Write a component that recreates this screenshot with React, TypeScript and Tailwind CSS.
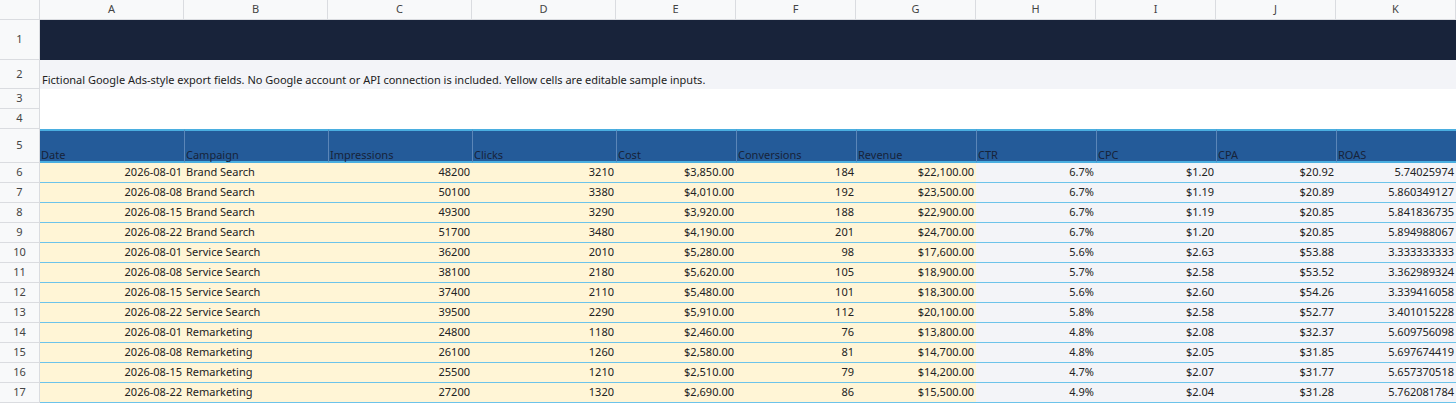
import React from "react";

const cols = ["A","B","C","D","E","F","G","H","I","J","K"];
const hdr = ["Date","Campaign","Impressions","Clicks","Cost","Conversions","Revenue","CTR","CPC","CPA","ROAS"];
const data: string[][] = [
["2026-08-01","Brand Search","48200","3210","$3,850.00","184","$22,100.00","6.7%","$1.20","$20.92","5.74025974"],
["2026-08-08","Brand Search","50100","3380","$4,010.00","192","$23,500.00","6.7%","$1.19","$20.89","5.860349127"],
["2026-08-15","Brand Search","49300","3290","$3,920.00","188","$22,900.00","6.7%","$1.19","$20.85","5.841836735"],
["2026-08-22","Brand Search","51700","3480","$4,190.00","201","$24,700.00","6.7%","$1.20","$20.85","5.894988067"],
["2026-08-01","Service Search","36200","2010","$5,280.00","98","$17,600.00","5.6%","$2.63","$53.88","3.333333333"],
["2026-08-08","Service Search","38100","2180","$5,620.00","105","$18,900.00","5.7%","$2.58","$53.52","3.362989324"],
["2026-08-15","Service Search","37400","2110","$5,480.00","101","$18,300.00","5.6%","$2.60","$54.26","3.339416058"],
["2026-08-22","Service Search","39500","2290","$5,910.00","112","$20,100.00","5.8%","$2.58","$52.77","3.401015228"],
["2026-08-01","Remarketing","24800","1180","$2,460.00","76","$13,800.00","4.8%","$2.08","$32.37","5.609756098"],
["2026-08-08","Remarketing","26100","1260","$2,580.00","81","$14,700.00","4.8%","$2.05","$31.85","5.697674419"],
["2026-08-15","Remarketing","25500","1210","$2,510.00","79","$14,200.00","4.7%","$2.07","$31.77","5.657370518"],
["2026-08-22","Remarketing","27200","1320","$2,690.00","86","$15,500.00","4.9%","$2.04","$31.28","5.762081784"],
];

const rh = "bg-[#f8f9fa] border-r border-b border-[#dadce0] text-[#444] text-[11px] flex items-center justify-center";

export default function App() {
  return (
    <div className="w-[1456px] h-[403px] overflow-hidden bg-white text-[11px] text-[#222]" style={{ fontFamily: "'Noto Sans', 'Open Sans', sans-serif" }}>
      <div className="grid grid-cols-[40px_144px_144px_144px_144px_120px_120px_120px_120px_120px_120px_120px] grid-rows-[20px_40px_29px_20px_20px_34px_repeat(12,20px)]">
        <div className={rh}></div>
        {cols.map(c => <div key={c} className={rh}>{c}</div>)}
        <div className={rh}>1</div>
        <div className="col-span-11 bg-[#18233a]"></div>
        <div className={rh}>2</div>
        <div className="col-span-11 bg-[#f3f4f8] flex items-end pl-[2px] pb-[1px] text-[#222]">Fictional Google Ads-style export fields. No Google account or API connection is included. Yellow cells are editable sample inputs.</div>
        <div className={rh}>3</div>
        <div className="col-span-11 bg-white"></div>
        <div className={rh}>4</div>
        <div className="col-span-11 bg-white"></div>
        <div className={rh}>5</div>
        {hdr.map((h, i) => (
          <div key={h} className={`bg-[#245b99] border-t-2 border-b-2 border-[#4aaee0] ${i > 0 ? "border-l border-l-[#5b86b8]" : ""} flex items-end pl-[1px] text-[#17233a] leading-[13px]`}>{h}</div>
        ))}
        {data.map((r, ri) => (
          <React.Fragment key={ri}>
            <div className={rh}>{ri + 6}</div>
            {r.map((v, ci) => (
              <div key={ci} className={`${ci < 7 ? "bg-[#fff5d6]" : "bg-[#f3f4f8]"} border-b border-[#6cc3ea] flex items-center ${ci === 1 ? "justify-start pl-[2px]" : "justify-end pr-[2px]"} whitespace-nowrap overflow-hidden`}>{v}</div>
            ))}
          </React.Fragment>
        ))}
      </div>
    </div>
  );
}
